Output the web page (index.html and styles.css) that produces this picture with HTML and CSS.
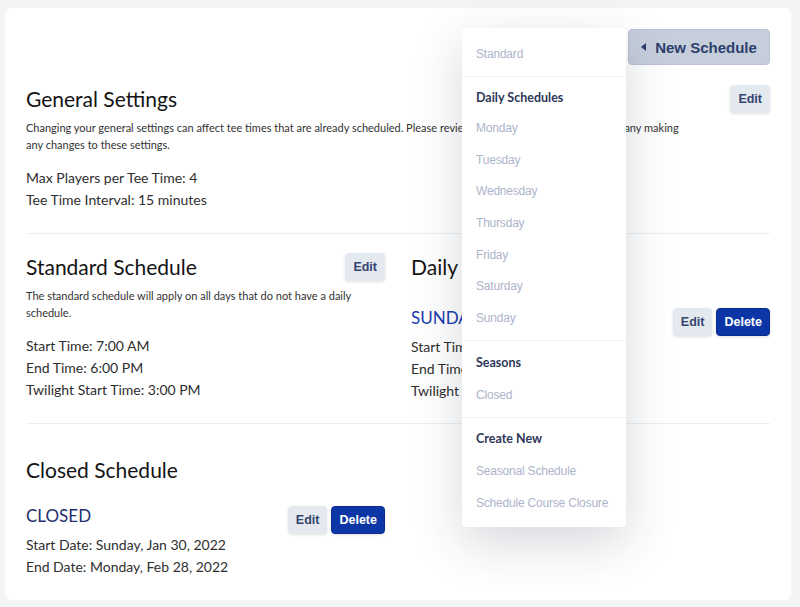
FILE: index.html
```html
<!DOCTYPE html>
<html lang="en">
<head>
  <meta charset="UTF-8" />
  <meta name="viewport" content="width=device-width, initial-scale=1.0"/>
  <title>Tee Sheet Schedules</title>
  <link rel="stylesheet" href="styles.css">
</head>
<body>

  <div class="card">
    <div class="topbar">
      <div class="menu-wrap">
        <button class="btn-new">
          <svg class="caret" width="6" height="8" viewBox="0 0 6 8"><path d="M5 0 L0 4 L5 8 Z" fill="currentColor"/></svg>
          New Schedule
        </button>

        <div class="dropdown">
          <div class="dd-section first">
            <div class="dd-item">Standard</div>
          </div>
          <div class="dd-section">
            <div class="dd-head">Daily Schedules</div>
            <div class="dd-item">Monday</div>
            <div class="dd-item">Tuesday</div>
            <div class="dd-item">Wednesday</div>
            <div class="dd-item">Thursday</div>
            <div class="dd-item">Friday</div>
            <div class="dd-item">Saturday</div>
            <div class="dd-item">Sunday</div>
          </div>
          <div class="dd-section roomy seasons">
            <div class="dd-head">Seasons</div>
            <div class="dd-item">Closed</div>
          </div>
          <div class="dd-section roomy last">
            <div class="dd-head">Create New</div>
            <div class="dd-item">Seasonal Schedule</div>
            <div class="dd-item">Schedule Course Closure</div>
          </div>
        </div>
      </div>
    </div>

    <section class="block general">
      <div class="block-head">
        <div>
          <h2>General Settings</h2>
          <p class="desc">Changing your general settings can affect tee times that are already scheduled. Please review your tee sheet carefully before any making any changes to these settings.</p>
        </div>
        <button class="btn btn-edit">Edit</button>
      </div>
      <div class="details">
        <div>Max Players per Tee Time: 4</div>
        <div>Tee Time Interval: 15 minutes</div>
      </div>
    </section>

    <section class="block cols schedules">
      <div class="col">
        <div class="block-head">
          <h2>Standard Schedule</h2>
          <button class="btn btn-edit">Edit</button>
        </div>
        <p class="desc">The standard schedule will apply on all days that do not have a daily schedule.</p>
        <div class="details">
          <div>Start Time: 7:00 AM</div>
          <div>End Time: 6:00 PM</div>
          <div>Twilight Start Time: 3:00 PM</div>
        </div>
      </div>

      <div class="col">
        <h2>Daily Schedules</h2>
        <div class="entry daily">
          <span class="entry-name sunday">SUNDAY</span>
          <div class="actions">
            <button class="btn btn-edit">Edit</button>
            <button class="btn btn-delete">Delete</button>
          </div>
        </div>
        <div class="details tight">
          <div>Start Time: 8:00 AM</div>
          <div>End Time: 5:00 PM</div>
          <div>Twilight Start Time: 2:00 PM</div>
        </div>
      </div>
    </section>

    <section class="block cols closed-block">
      <div class="col">
        <h2>Closed Schedule</h2>
        <div class="entry">
          <span class="entry-name closed">CLOSED</span>
          <div class="actions">
            <button class="btn btn-edit">Edit</button>
            <button class="btn btn-delete">Delete</button>
          </div>
        </div>
        <div class="details tight">
          <div>Start Date: Sunday, Jan 30, 2022</div>
          <div>End Date: Monday, Feb 28, 2022</div>
        </div>
      </div>
    </section>
  </div>

</body>
</html>
```

FILE: styles.css
```css
body {
  font-family: 'Lato', sans-serif;
  margin: 0;
  padding: 8px 9px 7px 5px;
  background: #f3f4f6;
  color: #2b2b2b;
}

.card {
  background: white;
  border-radius: 7px;
  padding: 21px 21px 22px 21px;
}

.topbar {
  display: flex;
  justify-content: flex-end;
  height: 36px;
  margin-bottom: 20px;
}

.menu-wrap {
  position: relative;
}

.btn-new {
  height: 36px;
  width: 142px;
  display: flex;
  align-items: center;
  justify-content: center;
  gap: 8px;
  background: #c6cedc;
  border: 1px solid #bac3d3;
  border-radius: 4px;
  color: #2c3e6c;
  font-family: 'Liberation Sans', sans-serif;
  font-weight: bold;
  font-size: 15px;
  cursor: pointer;
}

.dropdown {
  position: absolute;
  top: -1px;
  right: calc(100% + 2px);
  width: 164px;
  background: white;
  border-radius: 4px;
  box-shadow: 0 16px 50px rgba(30, 40, 60, 0.18);
  z-index: 5;
}

.dd-section {
  padding: 5px 0 6px;
  border-bottom: 1px solid #eef0f6;
}

.dd-section.first {
  padding-top: 10.5px;
  padding-bottom: 5.5px;
}

.dd-section.seasons {
  padding-top: 6px;
}

.dd-section.last {
  padding-bottom: 8px;
  border-bottom: none;
}

.dd-item,
.dd-head {
  height: 31.6px;
  line-height: 31.6px;
  padding-left: 14px;
  font-size: 12px;
}

.roomy .dd-item,
.roomy .dd-head {
  height: 32px;
  line-height: 32px;
}

.dd-item {
  font-family: 'Liberation Sans', sans-serif;
  color: #adb4ca;
  letter-spacing: -0.2px;
}

.dd-head {
  font-weight: bold;
  color: #2e3759;
  font-size: 12.5px;
}

.block {
  border-bottom: 1px solid #eceef1;
  padding-bottom: 22px;
}

.block.schedules {
  padding-top: 19px;
  padding-bottom: 21px;
}

.block.closed-block {
  border-bottom: none;
  padding-top: 32px;
  padding-bottom: 0;
}

.block-head {
  display: flex;
  justify-content: space-between;
  align-items: flex-start;
}

.general .desc {
  max-width: 665px;
}

h2 {
  margin: 0;
  font-size: 21px;
  font-weight: normal;
  line-height: 28px;
  color: #141414;
}

.desc {
  margin: 6px 0 0;
  font-size: 11px;
  line-height: 17px;
  color: #333;
}

.details {
  margin-top: 14px;
  font-size: 14px;
  line-height: 22px;
  color: #2e2e2e;
}

.details.tight {
  margin-top: 0;
}

.cols {
  display: grid;
  grid-template-columns: 1fr 1fr;
  gap: 26px;
}

.entry {
  display: flex;
  justify-content: space-between;
  align-items: flex-start;
  margin-top: 22px;
  height: 28px;
}

.entry.daily {
  margin-top: 27px;
}

.entry-name {
  font-size: 17px;
  line-height: 20px;
}

.sunday {
  color: #1a3bb0;
}

.closed {
  color: #252f6e;
}

.actions {
  display: flex;
  gap: 4px;
}

.btn {
  height: 28px;
  padding: 0 7px;
  border-radius: 4px;
  font-family: 'Liberation Sans', sans-serif;
  font-weight: bold;
  font-size: 12.5px;
  cursor: pointer;
  box-shadow: 0 1px 3px rgba(0, 0, 0, 0.12);
}

.btn-edit {
  background: #e4e8ef;
  border: 1px solid #e4e8ef;
  color: #33456f;
}

.btn-delete {
  background: #0c36a6;
  border: 1px solid #0a2d8f;
  color: white;
}
```
